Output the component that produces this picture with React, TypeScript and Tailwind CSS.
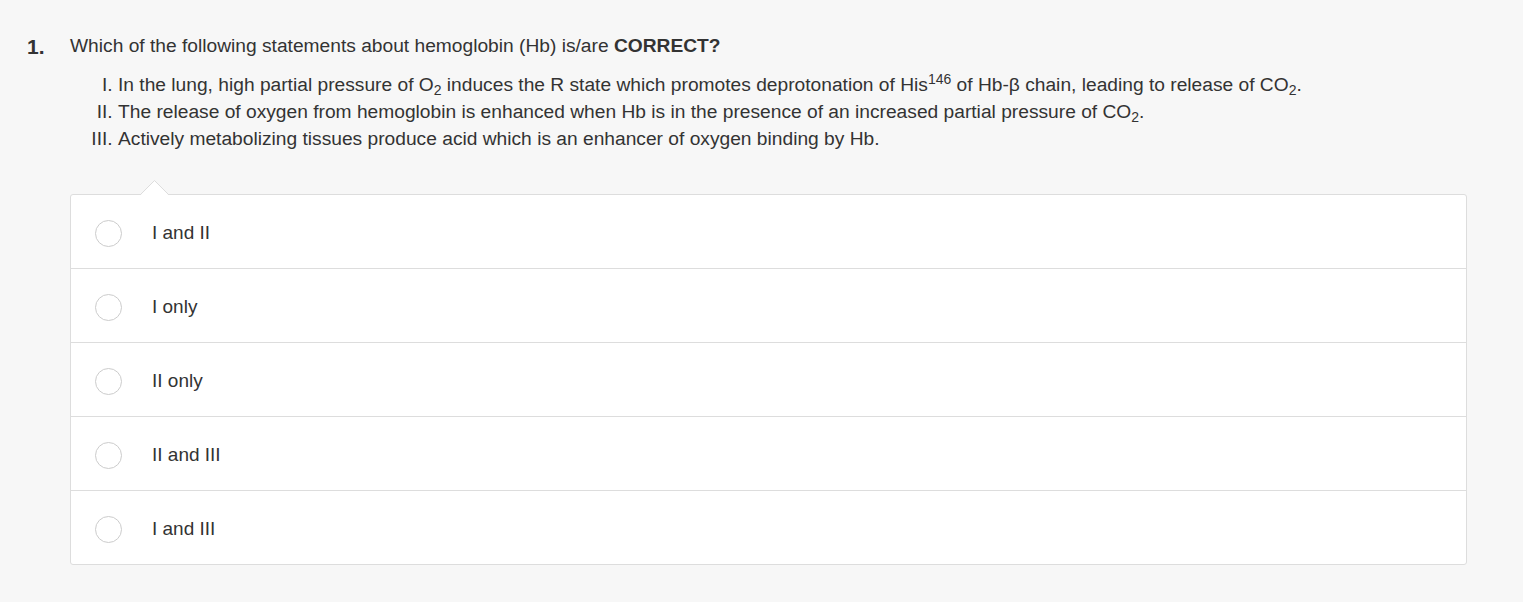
import type { ReactElement } from "react";
import { useState } from "react";

const options = ["I and II", "I only", "II only", "II and III", "I and III"];

export default function App(): ReactElement {
  const [picked, setPicked] = useState<number | null>(null);

  return (
    <div
      className="min-h-[602px] bg-[#f7f7f7] text-[#333] pt-[33px]"
      style={{ fontFamily: '"Liberation Sans", Arial, sans-serif' }}
    >
      <div className="flex">
        <div className="w-[70px] pl-[27px] text-[21px] leading-[28px] font-semibold text-[#333]">1.</div>
        <div className="flex-1 pr-[56px]">
          <p className="text-[19.2px] leading-[26px]">
            Which of the following statements about hemoglobin (Hb) is/are <b>CORRECT?</b>
          </p>
          <ol className="list-[upper-roman] pl-[48px] mt-[12px] text-[19.2px] leading-[27px]">
            <li>
              In the lung, high partial pressure of O<sub className="text-[14px]">2</sub> induces the R state which
              promotes deprotonation of His<sup className="text-[14px]">146</sup> of Hb-β chain, leading to release
              of CO<sub className="text-[14px]">2</sub>.
            </li>
            <li>
              The release of oxygen from hemoglobin is enhanced when Hb is in the presence of an increased partial
              pressure of CO<sub className="text-[14px]">2</sub>.
            </li>
            <li>Actively metabolizing tissues produce acid which is an enhancer of oxygen binding by Hb.</li>
          </ol>

          <div className="relative mt-[42px] bg-white border border-[#ddd] rounded-[3px]">
            <svg className="absolute left-[69px] -top-[15px]" width="29" height="16" viewBox="0 0 29 16">
              <polygon points="0,15.5 14.5,1 29,15.5" fill="#fff" />
              <polyline points="0,15 14.5,0.5 29,15" fill="none" stroke="#ddd" strokeWidth="1" />
            </svg>
            {options.map((label, i) => (
              <label
                key={label}
                className={`flex items-center pt-[3px] ${i > 0 ? "h-[74px] border-t border-[#ddd]" : "h-[73px]"} cursor-pointer`}
                onClick={() => setPicked(i)}
              >
                <span className="ml-[24px] w-[27px] h-[27px] rounded-full border border-[#ccc] bg-white flex items-center justify-center">
                  {picked === i && <span className="w-[13px] h-[13px] rounded-full bg-[#337ab7]" />}
                </span>
                <span className="ml-[30px] text-[19px] text-[#333]">{label}</span>
              </label>
            ))}
          </div>
        </div>
      </div>
    </div>
  );
}
